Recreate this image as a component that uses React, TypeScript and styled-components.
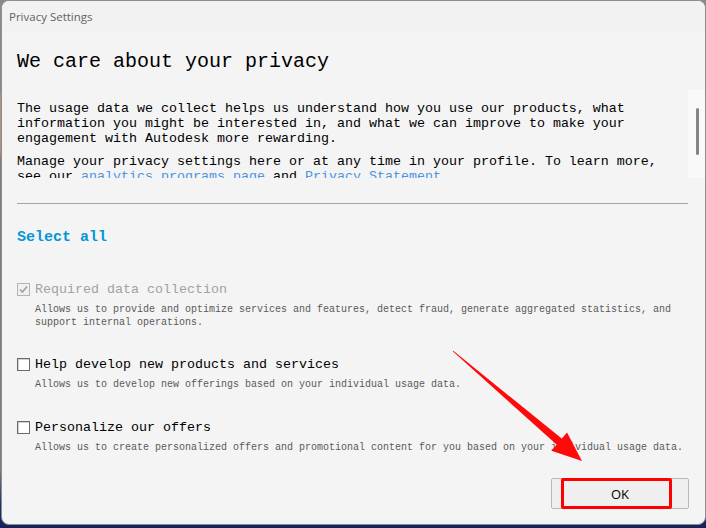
import React from "react";
import styled, { createGlobalStyle } from "styled-components";

const Global = createGlobalStyle`
  html, body { margin: 0; padding: 0; }
  body {
    width: 706px;
    height: 528px;
    overflow: hidden;
    background: linear-gradient(
      to bottom,
      #8a8a8a 0px, #8a8a8a 90px,
      #b38f7c 96px, #b38f7c 150px,
      #7c7c7c 160px, #7c7c7c 470px,
      #1c2f72 505px, #14225a 528px
    );
  }
`;

const Stage = styled.div`
  position: relative;
  width: 706px;
  height: 528px;
`;

const Window = styled.div`
  position: relative;
  margin-left: 1px;
  width: 703px;
  height: 523px;
  border: 1px solid #8e8e8e;
  border-radius: 8px;
  background: #f4f4f4;
  display: flex;
  flex-direction: column;
  overflow: hidden;
`;

const TitleBar = styled.div`
  height: 30px;
  flex: none;
  display: flex;
  align-items: center;
  padding-left: 7px;
  background: #f2f2f2;
  font-family: "Open Sans", "Noto Sans", sans-serif;
  font-size: 11.5px;
  color: #636363;
`;

const Content = styled.div`
  flex: 1;
  display: flex;
  flex-direction: column;
  padding: 0 17px 0 15px;
  font-family: "Liberation Mono", monospace;
  color: #000;
`;

const Heading = styled.h1`
  margin: 17px 0 0;
  font-size: 20px;
  line-height: 28px;
  font-weight: normal;
`;

const ScrollArea = styled.div`
  margin: 14px -17px 0 0;
  height: 88px;
  display: flex;
`;

const ScrollText = styled.div`
  flex: 1;
  overflow: hidden;
  padding-top: 11px;
  font-size: 13.333px;
  line-height: 15px;
`;

const Para = styled.p`
  margin: 0 0 8px;
  white-space: nowrap;
`;

const Link = styled.a`
  color: #4d93e0;
  text-decoration: none;
`;

const Track = styled.div`
  width: 17px;
  flex: none;
  background: #f9f9f9;
  position: relative;
`;

const Thumb = styled.div`
  position: absolute;
  left: 8px;
  top: 18px;
  width: 3px;
  height: 47px;
  border-radius: 2px;
  background: #858585;
`;

const Divider = styled.div`
  margin-top: 25px;
  height: 1px;
  background: #a3a3a3;
`;

const SelectAll = styled.div`
  margin-top: 24px;
  font-size: 15px;
  line-height: 20px;
  font-weight: bold;
  color: #0696d7;
`;

const Options = styled.div`
  margin-top: 34px;
  display: flex;
  flex-direction: column;
`;

const Option = styled.div<{ $gap?: number }>`
  display: flex;
  flex-direction: column;
  margin-top: ${(p) => p.$gap ?? 0}px;
`;

const OptionRow = styled.div`
  display: flex;
  align-items: center;
  gap: 5px;
`;

const Box = styled.span<{ $disabled?: boolean }>`
  width: 13px;
  height: 13px;
  box-sizing: border-box;
  flex: none;
  border: 1px solid ${(p) => (p.$disabled ? "#b4b4b4" : "#6a6a6a")};
  background: ${(p) => (p.$disabled ? "#f0f0f0" : "#ffffff")};
  box-shadow: ${(p) => (p.$disabled ? "none" : "inset 1px 1px 0 #d0d0d0")};
  display: flex;
  align-items: center;
  justify-content: center;
`;

const Label = styled.span<{ $disabled?: boolean }>`
  font-size: 13.333px;
  line-height: 15px;
  color: ${(p) => (p.$disabled ? "#a2a2a2" : "#000")};
`;

const Desc = styled.div`
  margin-top: 6px;
  padding-left: 18px;
  font-size: 10px;
  line-height: 13px;
  color: #5a5a5a;
`;

const Footer = styled.div`
  margin-top: auto;
  display: flex;
  justify-content: flex-end;
  padding: 0 16px 15px 0;
`;

const Button = styled.button`
  width: 138px;
  height: 31px;
  border: 1px solid #b9b9b9;
  border-radius: 2px;
  background: #efefef;
  font-family: "Open Sans", "Noto Sans", sans-serif;
  font-size: 13px;
  color: #000;
  padding: 0;
`;

const Highlight = styled.div`
  position: absolute;
  left: 559px;
  top: 477px;
  width: 111px;
  height: 31px;
  box-sizing: border-box;
  border: 3px solid #ff0000;
  border-radius: 2px;
  pointer-events: none;
`;

const ArrowLayer = styled.svg`
  position: absolute;
  left: 0;
  top: 0;
  pointer-events: none;
`;

function CheckBox({ checked, disabled }: { checked?: boolean; disabled?: boolean }) {
  return (
    <Box $disabled={disabled}>
      {checked && (
        <svg width="9" height="9" viewBox="0 0 9 9">
          <path d="M1 4.5 L3.5 7 L8 1.5" fill="none" stroke={disabled ? "#a0a0a0" : "#222"} strokeWidth="1.6" />
        </svg>
      )}
    </Box>
  );
}

function Arrow() {
  const sx = 453, sy = 351;
  const tx = 582, ty = 461;
  const dx = tx - sx, dy = ty - sy;
  const len = Math.hypot(dx, dy);
  const ux = dx / len, uy = dy / len;
  const px = -uy, py = ux;
  const headLen = 30, headHalf = 12;
  const bx = tx - ux * headLen, by = ty - uy * headLen;
  const shaft = [
    [sx + px * 0.4, sy + py * 0.4],
    [bx + ux * 4 + px * 4, by + uy * 4 + py * 4],
    [bx + ux * 4 - px * 4, by + uy * 4 - py * 4],
    [sx - px * 0.4, sy - py * 0.4],
  ];
  const head = [
    [tx, ty],
    [bx + px * headHalf, by + py * headHalf],
    [bx - px * headHalf, by - py * headHalf],
  ];
  const pts = (a: number[][]) => a.map((p) => p.map((v) => v.toFixed(1)).join(",")).join(" ");
  return (
    <ArrowLayer width="706" height="528" viewBox="0 0 706 528">
      <polygon points={pts(shaft)} fill="#ff0a0a" />
      <polygon points={pts(head)} fill="#ff0a0a" />
    </ArrowLayer>
  );
}

export default function App() {
  return (
    <Stage>
      <Global />
      <Window>
        <TitleBar>Privacy Settings</TitleBar>
        <Content>
          <Heading>We care about your privacy</Heading>
          <ScrollArea>
            <ScrollText>
              <Para>
                The usage data we collect helps us understand how you use our products, what
                <br />
                information you might be interested in, and what we can improve to make your
                <br />
                engagement with Autodesk more rewarding.
              </Para>
              <Para>
                Manage your privacy settings here or at any time in your profile. To learn more,
                <br />
                see our <Link>analytics programs page</Link> and <Link>Privacy Statement</Link>.
              </Para>
            </ScrollText>
            <Track>
              <Thumb />
            </Track>
          </ScrollArea>
          <Divider />
          <SelectAll>Select all</SelectAll>
          <Options>
            <Option>
              <OptionRow>
                <CheckBox checked disabled />
                <Label $disabled>Required data collection</Label>
              </OptionRow>
              <Desc>
                Allows us to provide and optimize services and features, detect fraud, generate aggregated statistics, and support internal operations.
              </Desc>
            </Option>
            <Option $gap={28}>
              <OptionRow>
                <CheckBox />
                <Label>Help develop new products and services</Label>
              </OptionRow>
              <Desc>Allows us to develop new offerings based on your individual usage data.</Desc>
            </Option>
            <Option $gap={29}>
              <OptionRow>
                <CheckBox />
                <Label>Personalize our offers</Label>
              </OptionRow>
              <Desc>
                Allows us to create personalized offers and promotional content for you based on your individual usage data.
              </Desc>
            </Option>
          </Options>
        </Content>
        <Footer>
          <Button>OK</Button>
        </Footer>
        <Highlight />
      </Window>
      <Arrow />
    </Stage>
  );
}
